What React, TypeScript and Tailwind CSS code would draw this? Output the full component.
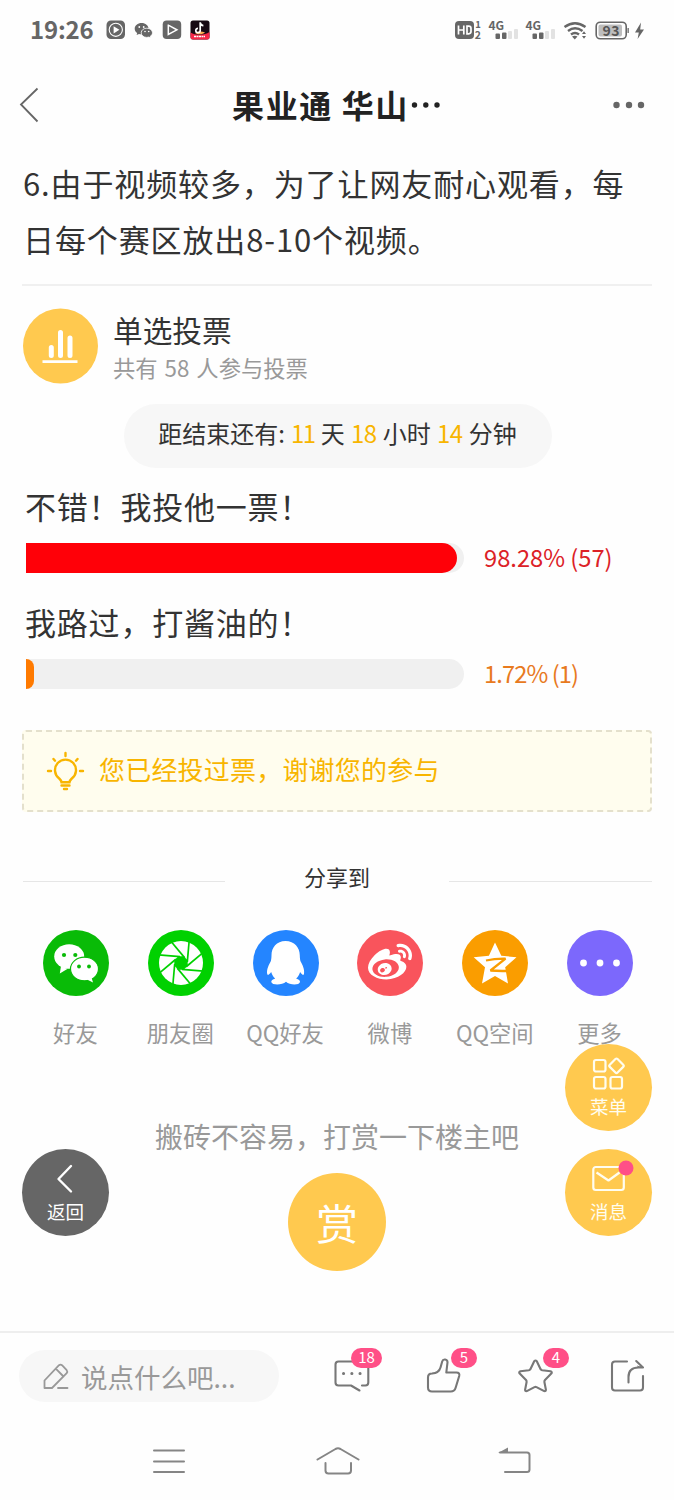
import type { ReactNode } from 'react';
import { FaWeibo } from 'react-icons/fa';

interface VoteOption {
  label: string;
  percent: number;
  text: string;
  barClass: string;
  textClass: string;
}

const options: VoteOption[] = [
  { label: '不错！我投他一票！', percent: 98.4, text: '98.28% (57)', barClass: 'bg-[#ff0008] rounded-r-[15px]', textClass: 'text-[#dc2127]' },
  { label: '我路过，打酱油的！', percent: 1.9, text: '1.72% (1)', barClass: 'bg-[#ff7a00] rounded-r-[8px]', textClass: 'text-[#e87a1e] tracking-[-0.900px]' },
];

function StatusBar() {
  return (
    <div className="flex h-[60px] items-center pl-[30px] pr-[29px] text-[#666]">
      <span className="w-[76px] pb-[2px] text-[24px] leading-none font-bold tracking-[-0.200px]">19:26</span>
      <svg width="20" height="20" viewBox="0 0 20 20">
        <rect x="0.5" y="0.5" width="18.5" height="18.5" rx="4.5" fill="#666" />
        <circle cx="9.8" cy="9.8" r="6.6" fill="none" stroke="#fff" strokeWidth="1.1" />
        <path d="M7.6 6.2v7.2l5.8-3.6z" fill="#fff" />
      </svg>
      <svg width="20" height="20" viewBox="0 0 20 20" className="ml-[8px]">
        <path d="M7.6 3C3.700 3 .7 5.600.7 8.700c0 1.800 1 3.300 2.500 4.300l-.6 2.100 2.400-1.200c.8.2 1.700.3 2.600.3 3.900 0 6.900-2.500 6.900-5.600S11.500 3 7.600 3z" fill="#666" />
        <path d="M12.800 8.200c-3.200 0-5.600 2-5.600 4.600s2.400 4.600 5.600 4.600c.7 0 1.400-.1 2-.3l1.900 1-.5-1.700c1.400-.9 2.300-2.100 2.300-3.600 0-2.600-2.500-4.600-5.700-4.600z" fill="#666" stroke="#fff" strokeWidth="0.8" />
        <circle cx="5.300" cy="7" r="0.9" fill="#fff" />
        <circle cx="9.700" cy="7" r="0.9" fill="#fff" />
        <circle cx="11" cy="11.500" r="0.8" fill="#fff" />
        <circle cx="14.700" cy="11.500" r="0.8" fill="#fff" />
      </svg>
      <svg width="20" height="20" viewBox="0 0 20 20" className="ml-[8px]">
        <rect x="0.7" y="0.5" width="18.5" height="18.5" rx="4" fill="#666" />
        <path d="M6.300 7.500v7l8.600-4.700-8.600-4.600M6.300 4.500v4" fill="none" stroke="#fff" strokeWidth="1.500" />
      </svg>
      <svg width="20" height="20" viewBox="0 0 20 20" className="ml-[8px]">
        <rect x="0.500" y="0.5" width="19" height="19" rx="2.500" fill="#170a14" />
        <path d="M.5 12.500c5 3 14 3 19-.5V17a2.500 2.500 0 0 1-2.500 2.500H3A2.500 2.500 0 0 1 .5 17z" fill="#f52848" />
        <path d="M5 13c3-2 7-2 10-.5-2 2-7 2.500-10 .5z" fill="#ffae52" />
        <path d="M10.200 2.200v8.300a2.200 2.200 0 1 1-2.200-2.200M10.200 2.500c.3 2 1.500 3 3.200 3.100" fill="none" stroke="#fff" strokeWidth="1.700" />
        <path d="M4 16.500h11" stroke="#fff" strokeWidth="1.600" strokeDasharray="2 .5" />
      </svg>

      <svg width="192" height="36" viewBox="453 12 192 36" className="ml-auto" fill="#666">
        <rect x="455" y="21" width="19" height="18" rx="4" />
        <path d="M458.500 25.500v9M463.800 25.500v9M458.500 30h5.300M467 26.200v7.600h1.700q2.300 0 2.300-2.200v-3.200q0-2.200-2.300-2.200z" fill="none" stroke="#fff" strokeWidth="1.700" />
        <text x="475.200" y="28.200" fontSize="9.500" fontWeight="bold">1</text>
        <text x="474.800" y="38.800" fontSize="10.500" fontWeight="bold">2</text>
        {[0, 37].map((dx) => (
          <g key={dx} transform={`translate(${dx} 0)`}>
            <text x="488.500" y="30" fontSize="12" fontWeight="bold" letterSpacing="-0.2">4G</text>
            <rect x="495.500" y="33.500" width="4.500" height="5.500" rx="1" />
            <rect x="502" y="32.500" width="4.500" height="6.500" rx="1" />
            <rect x="508" y="31" width="4" height="8" rx="1" fill="#e2e2e2" />
            <rect x="514" y="29" width="4" height="10" rx="1" fill="#e2e2e2" />
          </g>
        ))}
        <path d="M564.500 27q10.500-7.500 21 0M568 31q7-5.500 14.500 0M571 34.500q4-3.200 8 0" fill="none" stroke="#666" strokeWidth="2.400" />
        <path d="M572 36.500q2.700-1.500 5.500 0l-2.700 3zM582 34l2-2.800 2 2.800zM582 36l2 2.800 2-2.800z" />
        <rect x="596.200" y="22.200" width="30" height="16.600" rx="4" fill="none" stroke="#666" strokeWidth="1.600" />
        <rect x="598.500" y="24.500" width="23.500" height="12" rx="2" fill="#bdbdbd" />
        <text x="602.500" y="36" fontSize="14" fontWeight="bold" fill="#555" letterSpacing="0.600">93</text>
        <rect x="627.500" y="28" width="1.300" height="5" />
        <path d="M641 22.500l-6 10h3.800l-1.200 6.500 6.400-9.500h-3.800z" />
      </svg>
    </div>
  );
}

function NavBar() {
  return (
    <div className="flex h-[90px] items-center justify-between pl-[18px] pr-[28px]">
      <svg width="60" height="36" viewBox="0 0 60 36" fill="none" stroke="#666" strokeWidth="1.800">
        <path d="M19.500 1.500L3 17.500l16.500 17" />
      </svg>
      <h1 className="flex items-center pb-[2px] text-[32px] font-bold tracking-[1.600px] text-[#222]">
        <span>果业通 华山</span>
        <svg width="33" height="8" viewBox="0 0 33 8" fill="#222">
          <circle cx="5.500" cy="5" r="2.700" />
          <circle cx="16.800" cy="5" r="2.700" />
          <circle cx="28" cy="5" r="2.700" />
        </svg>
      </h1>
      <svg width="50" height="10" viewBox="0 0 50 10" fill="#666">
        <circle cx="20.500" cy="5" r="3.200" />
        <circle cx="33" cy="5" r="3.200" />
        <circle cx="45" cy="5" r="3.200" />
      </svg>
    </div>
  );
}

function VoteBox() {
  return (
    <section>
      <div className="flex h-[76px] items-center">
        <svg width="76" height="76" viewBox="0.5 0 76 76">
          <circle cx="38" cy="38" r="37.500" fill="#ffc94f" />
          <path d="M28.800 39.500v8M38 24.500v23M47.500 30v17.500" stroke="#fff" strokeWidth="5" strokeLinecap="round" />
          <path d="M20 53.600h35" stroke="#fff" strokeWidth="2.600" />
        </svg>
        <div className="ml-[14px]">
          <h2 className="h-[41px] pt-px text-[29.700px] leading-[40px] text-[#333]">单选投票</h2>
          <p className="text-[22.300px] leading-[34px] text-[#999] [word-spacing:2px]">共有 58 人参与投票</p>
        </div>
      </div>
      <div className="mx-auto mt-[20px] h-[64px] w-[428px] rounded-full bg-[#f7f7f7] text-center text-[24px] leading-[57px] whitespace-nowrap text-[#333] [word-spacing:0.800px]">
        距结束还有: <b className="font-normal tracking-[-1.500px] text-[#f8b500]">11</b> 天{' '}
        <b className="font-normal tracking-[-0.500px] text-[#f8b500]">18</b> 小时{' '}
        <b className="font-normal tracking-[-0.500px] text-[#f8b500]">14</b> 分钟
      </div>
      <div className="mt-[15px] pl-[3px]">
        {options.map((o) => (
          <div key={o.label} className="h-[116px]">
            <div className="-ml-px h-[60px] text-[31px] leading-[46px] tracking-[0.800px] text-[#333]">{o.label}</div>
            <div className="flex h-[30px] items-center">
              <div className="h-[30px] w-[438px] overflow-hidden rounded-r-full bg-[#f0f0f0]">
                <div className={`h-full ${o.barClass}`} style={{ width: `${o.percent}%` }} />
              </div>
              <span className={`ml-[20px] pb-[2px] text-[23.700px] leading-[30px] ${o.textClass}`}>{o.text}</span>
            </div>
          </div>
        ))}
      </div>
      <div className="mt-[15px] -ml-px flex h-[82px] items-center rounded-[4px] border-2 border-dashed border-[#e4e0cc] bg-[#fffdee] pl-[22px] text-[26px] text-[#f8b500]">
        <svg width="40" height="40" viewBox="0 0 40 40" fill="none" stroke="#f8b500" strokeWidth="2.400" strokeLinecap="round">
          <path d="M15.500 31.200c-.3-1.700-.8-2.300-2.300-3.700a10.500 10.500 0 1 1 12.600 0c-1.500 1.400-2 2-2.300 3.700z" />
          <path d="M15.500 34.500h8M18 38h3M19.500 2v3M2 20h3M34 20h3M7.500 8l1.500 1.700M31.500 8L30 9.700" />
        </svg>
        <span className="ml-[13px] pb-[5px] tracking-[0.200px]">您已经投过票，谢谢您的参与</span>
      </div>
    </section>
  );
}

interface ShareItem {
  name: string;
  color: string;
  icon: ReactNode;
}

const shareItems: ShareItem[] = [
  {
    name: '好友',
    color: 'bg-[#09bb07]',
    icon: (
      <svg width="66" height="66" viewBox="0 0 66 66" fill="#fff">
        <ellipse cx="26.200" cy="26.500" rx="15" ry="12.300" />
        <path d="M18 36l-1.200 7.500 7.500-4.500z" />
        <ellipse cx="41.500" cy="39" rx="14" ry="11.800" stroke="#09bb07" strokeWidth="1.200" />
        <path d="M44 49.500l6 3-1.500-5z" />
        <g fill="#09bb07">
          <circle cx="21" cy="25" r="2.100" />
          <circle cx="32.300" cy="25" r="2.100" />
          <circle cx="36" cy="36.500" r="1.900" />
          <circle cx="46" cy="36.500" r="1.900" />
        </g>
      </svg>
    ),
  },
  {
    name: '朋友圈',
    color: 'bg-[#00d100]',
    icon: (
      <svg width="66" height="66" viewBox="0 0 66 66">
        <circle cx="33" cy="33" r="22" fill="#fff" />
        {[0, 45, 90, 135, 180, 225, 270, 315].map((a) => (
          <path key={a} d="M41.200 10.500L39.300 32" transform={`rotate(${a} 33 33)`} stroke="#00d100" strokeWidth="1.700" />
        ))}
        <path d="M30.300 26.300h5.400l4 4v5.400l-4 4h-5.400l-4-4v-5.400z" fill="#00d100" />
      </svg>
    ),
  },
  {
    name: 'QQ好友',
    color: 'bg-[#2485ff]',
    icon: (
      <svg width="66" height="66" viewBox="0 0 66 66" fill="#fff">
        <path d="M32.500 11c-9 0-14 6.500-14 14.500 0 2-.3 4-.6 5.500-2 3.500-4.500 8.500-3.700 13 .5 1.800 2 .5 4-2 .6 2.600 2 4.800 4 6.500-2.500.7-4.200 2-3.900 3.500.7 3.500 11 3.300 14.700-.2 3.700 3.500 13.300 3.700 14 .2.300-1.500-1.400-2.800-3.900-3.500 2-1.700 3.400-3.900 4-6.500 1.800 2.500 3.300 3.800 3.900 2 .8-4.500-1.500-9.500-3.600-13-.3-1.500-.6-3.500-.6-5.500 0-8-5.300-14.500-14.300-14.500z" />
      </svg>
    ),
  },
  { name: '微博', color: 'bg-[#f9545c]', icon: <FaWeibo size={44} color="#fff" className="mt-[-1px]" /> },
  {
    name: 'QQ空间',
    color: 'bg-[#fa9d00]',
    icon: (
      <svg width="66" height="66" viewBox="0 0 66 66">
        <path d="M33 12.500l6.300 13.300 15.200 1.400-11.300 10L46 53.500l-13-7.400-13 7.400 3-16.300-11.300-10 15.200-1.400z" fill="#fff" />
        <path d="M24 30.500q9-2 19.500-1.800L28.500 40.500q9 .8 20 .3" fill="none" stroke="#fa9d00" strokeWidth="2.300" strokeLinejoin="bevel" />
      </svg>
    ),
  },
  {
    name: '更多',
    color: 'bg-[#7c68fc]',
    icon: (
      <svg width="66" height="66" viewBox="0 0 66 66" fill="#fff">
        <circle cx="16.500" cy="33" r="3.400" />
        <circle cx="33" cy="33" r="3.400" />
        <circle cx="49.500" cy="33" r="3.400" />
      </svg>
    ),
  },
];

function ShareBox() {
  return (
    <section className="mt-[50px]">
      <div className="flex h-[32px] items-center justify-between text-[22px] text-[#333]">
        <span className="mt-[6px] h-px w-[202px] bg-[#e6e6e6]" />
        <span className="pb-[4px]">分享到</span>
        <span className="mt-[6px] h-px w-[203px] bg-[#e6e6e6]" />
      </div>
      <div className="mt-[36px] grid grid-cols-6">
        {shareItems.map((item) => (
          <div key={item.name} className="flex flex-col items-center">
            <div className={`ml-px flex size-[66px] items-center justify-center rounded-full ${item.color}`}>{item.icon}</div>
            <span className="mt-[20px] text-[22.300px] leading-[32px] whitespace-nowrap text-[#999]">{item.name}</span>
          </div>
        ))}
      </div>
    </section>
  );
}

function RewardBox() {
  return (
    <section className="mt-[67px] mr-px flex flex-col items-center">
      <p className="text-[28px] leading-[42px] text-[#999]">搬砖不容易，打赏一下楼主吧</p>
      <button className="mt-[16px] size-[98px] rounded-full bg-[#ffc94f] pb-[1px] text-[42px] text-white">赏</button>
    </section>
  );
}

function FloatButtons() {
  return (
    <>
      <button className="absolute top-[1149px] left-[22px] flex size-[87px] flex-col items-center rounded-full bg-[#666] text-[18.500px] leading-[26px] text-white">
        <svg width="30" height="36" viewBox="0 0 30 36" fill="none" stroke="#fff" strokeWidth="2.400" strokeLinecap="round" strokeLinejoin="round" className="mt-[13px]">
          <path d="M20 4L7.500 17 20 29.500" />
        </svg>
        返回
      </button>
      <button className="absolute top-[1044px] left-[565px] flex size-[87px] flex-col items-center rounded-full bg-[#ffc94f] text-[18.500px] leading-[26px] text-[#fffdf0]">
        <svg width="34" height="36" viewBox="0 0 34 36" fill="none" stroke="#fffdf0" strokeWidth="2.200" strokeLinejoin="round" className="mt-[13px]">
          <rect x="2" y="3" width="11.500" height="11.500" rx="2" />
          <rect x="2" y="20" width="11.500" height="11.500" rx="2" />
          <rect x="18.500" y="20" width="11.500" height="11.500" rx="2" />
          <rect x="19" y="3.300" width="11" height="11" rx="1.500" transform="rotate(45 24.500 8.800)" />
        </svg>
        菜单
      </button>
      <button className="absolute top-[1149px] left-[565px] flex size-[87px] flex-col items-center rounded-full bg-[#ffc94f] text-[18.500px] leading-[26px] text-[#fffdf0]">
        <svg width="52" height="36" viewBox="0 0 52 36" fill="none" stroke="#fffdf0" strokeWidth="2.200" strokeLinejoin="round" className="mt-[13px] overflow-visible">
          <rect x="10.300" y="5" width="30.500" height="23" rx="2.500" />
          <path d="M13.500 10.500l12 8 11-8" />
          <circle cx="43" cy="6" r="7.500" fill="#ff4f87" stroke="none" />
        </svg>
        消息
      </button>
    </>
  );
}

interface ToolProps {
  count?: string;
  children: ReactNode;
}

function Tool({ count, children }: ToolProps) {
  return (
    <div className="relative size-[40px]">
      <svg width="40" height="40" viewBox="0 0 40 40" fill="none" stroke="#777" strokeWidth="2.100" strokeLinecap="round" strokeLinejoin="round">
        {children}
      </svg>
      {count && (
        <span className={`absolute top-[-8px] h-[20px] rounded-full bg-[#ff4f87] text-center text-[15px] leading-[18px] text-white ${count.length > 1 ? 'left-[19px] w-[31px]' : 'left-[27px] w-[26px]'}`}>
          {count}
        </span>
      )}
    </div>
  );
}

function BottomBar() {
  return (
    <footer>
      <div className="flex h-[87px] items-center border-t-2 border-[#eee] pl-[19px]">
        <div className="flex h-[52px] w-[260px] items-center rounded-full bg-[#f7f7f7] pl-[23px] text-[26.500px] text-[#999]">
          <svg width="30" height="28" viewBox="0 0 30 28" fill="none" stroke="#999" strokeWidth="1.800" strokeLinejoin="round" strokeLinecap="round">
            <path d="M2.500 26v-7.500L17 3.200q1.500-1.200 3 0l4.700 5q1.200 1.500 0 3L10 26zM14 6.800l7.500 7.700M16 26h9.500" />
          </svg>
          <span className="ml-[9px] pt-[2px]">说点什么吧...</span>
        </div>
        <div className="ml-[53px] flex gap-[52px]">
          <Tool count="18">
            <path d="M36.300 22V8.500q0-3-3-3H6.500q-3 0-3 3v18q0 3 3 3H19l8.500 5M36.300 22v4.500q0 3-3 3H30" />
            <path d="M11.500 17.500h.1M19.800 17.500h.1M28 17.500h.1" strokeWidth="3" />
          </Tool>
          <Tool count="5">
            <path d="M8 17.500q7-.5 8.500-6l1.700-6c.8-3 5.300-2.500 5.300.8L22.300 16.500h10.200q3.500 0 2.700 3.500l-3.500 11.500q-1 4-5 4H8q-4 0-4-4V21.500q0-4 4-4z" />
          </Tool>
          <Tool count="4">
            <path d="M18.200 5.200q1.300-1.400 2.600 0l3.800 8q.6.900 1.600 1.100l8.400 1q2 .8.700 2.300L29 24q-.7.900-.6 2l1.500 7.700q0 1.800-1.700 1.400l-7.700-4q-1-.4-2 0l-7.700 4q-1.700.4-1.700-1.400l1.500-7.700q.1-1.100-.6-2l-6.300-6.400q-1.300-1.500.7-2.300l8.400-1q1-.2 1.600-1.100z" />
          </Tool>
          <Tool>
            <path d="M19 5.500H7q-3 0-3 3v23q0 3 3 3h25q3 0 3-3V20M20.500 26.500V21q0-9.500 10-9.500h4.500l-6.800-6.500" />
            <path d="M35 11.500h-5l-1-2z" fill="#777" stroke="none" />
          </Tool>
        </div>
      </div>
      <div className="flex h-[82px] items-center pt-[6px] pl-[153px]">
        <svg width="32" height="30" viewBox="0 0 32 30" fill="none" stroke="#858585" strokeWidth="2" strokeLinecap="round">
          <path d="M1 3.500h30M1 14.500h30M1 25h30" />
        </svg>
        <svg width="44" height="30" viewBox="0 0 44 30" fill="none" stroke="#858585" strokeWidth="2" strokeLinecap="round" strokeLinejoin="round" className="ml-[131px]">
          <path d="M1.500 12.500L19.500 2q2.500-1.300 5 0l18 10.500M9.500 16v7.500q0 3 3 3H32q3 0 3-3V16" />
        </svg>
        <svg width="34" height="30" viewBox="0 0 34 30" fill="none" stroke="#858585" strokeWidth="2" strokeLinecap="round" strokeLinejoin="round" className="ml-[138px]">
          <path d="M2 5.500h27q2.500 0 2.500 2.500v14.500q0 2.500-2.500 2.500H7" />
          <path d="M10 .5v5.500H0z" fill="#858585" stroke="none" />
        </svg>
      </div>
    </footer>
  );
}

export default function App() {
  return (
    <div className="relative flex h-[1500px] w-[674px] flex-col overflow-hidden bg-[#fefefe] font-['Noto_Sans_CJK_SC',sans-serif]">
      <StatusBar />
      <NavBar />
      <main className="flex-1 pr-[22px] pl-[23px]">
        <p className="mt-[5px] mr-[-22px] text-[31px] leading-[56px] tracking-[0.880px] text-[#333]">
          6.由于视频较多，为了让网友耐心观看，每
          <br />
          日每个赛区放出8-10个视频。
        </p>
        <hr className="mt-[17px] mb-[22px] -ml-px border-t-2 border-[#f0f0f0]" />
        <VoteBox />
        <ShareBox />
        <RewardBox />
      </main>
      <BottomBar />
      <FloatButtons />
    </div>
  );
}
